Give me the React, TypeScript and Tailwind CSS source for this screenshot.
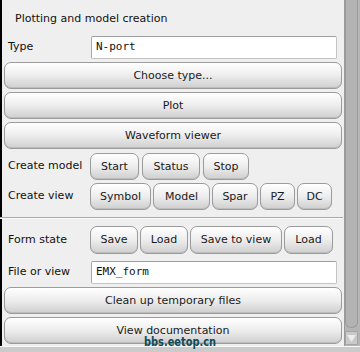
import React from "react";

const font = { fontFamily: '"DejaVu Sans", Verdana, sans-serif' };

function Btn({ children, className = "" }: { children: React.ReactNode; className?: string }) {
  return (
    <div
      className={
        "h-[27px] pt-[1px] flex items-center justify-center rounded-[7px] border border-[#9b9b9b] bg-linear-to-b from-[#ffffff] via-[#ededed] to-[#cfcfcf] text-[11px] text-[#1a1a1a] shadow-[inset_0_-1px_0_#bdbdbd] " +
        className
      }
    >
      {children}
    </div>
  );
}

function Field({ value }: { value: string }) {
  return (
    <div
      className="h-[23px] w-[246px] flex items-center bg-white border border-[#c4c4c4] border-t-[#9e9e9e] border-l-[#a8a8a8] rounded-[2px] pl-[4px] text-[11px] text-[#111]"
      style={{ fontFamily: '"DejaVu Sans Mono", monospace' }}
    >
      {value}
    </div>
  );
}

function Label({ children }: { children: React.ReactNode }) {
  return <div className="w-[88px] shrink-0 pl-[6px] text-[11px] text-[#111]">{children}</div>;
}

export default function App() {
  return (
    <div className="relative w-[360px] h-[352px] flex flex-col bg-[#efefef] overflow-hidden" style={font}>
      <div className="flex h-[346px]">
        <div className="w-[344px] h-full border-l-2 border-black flex flex-col pt-[11px]">
          <div className="leading-[16px] text-[11px] text-[#111] pl-[13px]">Plotting and model creation</div>

          <div className="mt-[9px] flex items-center">
            <Label>Type</Label>
            <div className="ml-[1px]">
              <Field value="N-port" />
            </div>
          </div>

          <Btn className="mt-[3px] mx-[2px]">Choose type...</Btn>
          <Btn className="mt-[3px] mx-[2px]">Plot</Btn>
          <Btn className="mt-[3px] mx-[2px]">Waveform viewer</Btn>

          <div className="mt-[4px] flex items-center">
            <Label>Create model</Label>
            <div className="flex gap-[3px]">
              <Btn className="w-[49px]">Start</Btn>
              <Btn className="w-[58px]">Status</Btn>
              <Btn className="w-[46px]">Stop</Btn>
            </div>
          </div>

          <div className="mt-[3px] flex items-center">
            <Label>Create view</Label>
            <div className="flex gap-[2px]">
              <Btn className="w-[61px]">Symbol</Btn>
              <Btn className="w-[57px]">Model</Btn>
              <Btn className="w-[46px]">Spar</Btn>
              <Btn className="w-[35px]">PZ</Btn>
              <Btn className="w-[35px]">DC</Btn>
            </div>
          </div>

          <div className="mt-[7px] h-px bg-[#a9a9a9] -ml-[2px] mr-[1px]" />
          <div className="h-px bg-[#fbfbfb] -ml-[2px] mr-[1px]" />

          <div className="mt-[7px] flex items-center">
            <Label>Form state</Label>
            <div className="flex gap-[2px]">
              <Btn className="w-[48px] h-[28px]">Save</Btn>
              <Btn className="w-[48px] h-[28px]">Load</Btn>
              <Btn className="w-[92px] h-[28px]">Save to view</Btn>
              <Btn className="w-[49px] h-[28px]">Load</Btn>
            </div>
          </div>

          <div className="mt-[7px] flex items-center">
            <Label>File or view</Label>
            <div className="ml-[1px]">
              <Field value="EMX_form" />
            </div>
          </div>

          <Btn className="mt-[3px] mx-[2px]">Clean up temporary files</Btn>
          <Btn className="mt-[3px] mx-[2px]">View documentation</Btn>
        </div>

        <div className="w-[16px] h-full bg-[#b5b5b5] border-l border-[#9a9a9a] flex flex-col">
          <div className="flex-1 mr-[2px] rounded-b-[6px] border border-t-0 border-[#9c9c9c] bg-[#b3b3b3]" />
          <div className="mt-[3px] mb-[1px] mr-[2px] h-[14px] bg-[#c9c9c9] border border-[#a5a5a5] flex items-center justify-center">
            <svg width="9" height="7" viewBox="0 0 9 7">
              <polygon points="0,0 9,0 4.5,7" fill="#ececec" />
            </svg>
          </div>
        </div>
      </div>
      <div className="flex-1 border-t border-[#f8f8f8] bg-[#cbcbcb]" />

      <div
        className="absolute left-[144px] top-[335px] text-[13px] font-bold leading-[14px] text-[#0f4b58] origin-left scale-x-[0.84]"
        style={{ fontFamily: '"DejaVu Sans Condensed", "DejaVu Sans", sans-serif' }}
      >
        bbs.eetop.cn
      </div>
    </div>
  );
}
